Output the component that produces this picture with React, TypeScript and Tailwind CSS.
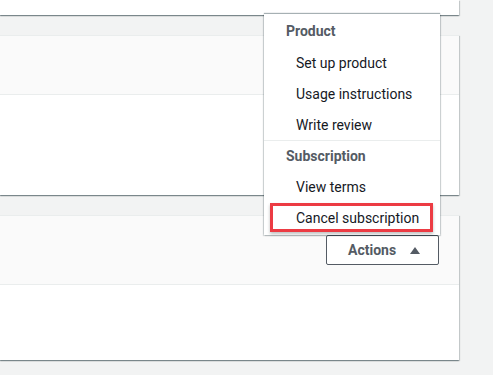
import React from "react";

const cardShadow =
  "shadow-[0_1px_1px_0_rgba(0,28,36,0.3),1px_1px_1px_0_rgba(0,28,36,0.15),-1px_1px_1px_0_rgba(0,28,36,0.15)]";

function Menu() {
  return (
    <div className="absolute bottom-full right-[-1px] w-[176px] h-[221px] bg-white shadow-[0_-1px_1px_0_rgba(0,28,36,0.35),1px_1px_1px_0_rgba(0,28,36,0.15),-1px_1px_1px_0_rgba(0,28,36,0.15)] flex flex-col pt-px text-[14px]">
      <div className="h-[33px] flex items-center pl-[22px] font-bold text-[#545b64]">Product</div>
      <div className="h-[31px] flex items-center pl-[32px] text-[#16191f]">Set up product</div>
      <div className="h-[31px] flex items-center pl-[32px] text-[#16191f]">Usage instructions</div>
      <div className="h-[30px] flex items-center pl-[32px] text-[#16191f]">Write review</div>
      <div className="h-px bg-[#eaeded]" />
      <div className="h-[31px] flex items-center pl-[22px] font-bold text-[#545b64]">Subscription</div>
      <div className="h-[31px] flex items-center pl-[32px] text-[#16191f]">View terms</div>
      <div className="relative h-[30px] flex items-center pl-[32px] text-[#16191f]">
        Cancel subscription
        <div className="absolute left-[6px] top-0 w-[163px] h-[29px] border-[3px] border-[#ec3b43] shadow-[0_2px_3px_0_rgba(0,0,0,0.25)]" />
      </div>
    </div>
  );
}

export default function App() {
  return (
    <div
      className="w-[493px] h-[375px] bg-[#f2f3f3] overflow-hidden"
      style={{ fontFamily: "Roboto, 'Liberation Sans', Arial, sans-serif" }}
    >
      <div className="w-[459px] flex flex-col">
        <div className={`h-[15px] bg-white ${cardShadow}`} />
        <div className={`mt-[20px] bg-white border-t border-[#eaeded] ${cardShadow}`}>
          <div className="h-[59px] bg-[#fafafa] border-b border-[#eaeded]" />
          <div className="h-[100px]" />
        </div>
        <div className={`mt-[20px] bg-white border-t border-[#eaeded] ${cardShadow}`}>
          <div className="h-[69px] bg-[#fafafa] border-b border-[#eaeded] flex items-center justify-end pr-[20px]">
            <div className="relative">
              <Menu />
              <button className="w-[113px] h-[30px] border border-[#545b64] rounded-[2px] bg-white flex items-center pl-[21px] text-[14px] font-bold text-[#545b64]">
                <span>Actions</span>
                <svg className="ml-[14px]" width="10" height="7" viewBox="0 0 10 7">
                  <path d="M5 0 L10 7 L0 7 Z" fill="#545b64" />
                </svg>
              </button>
            </div>
          </div>
          <div className="h-[75px]" />
        </div>
      </div>
    </div>
  );
}
